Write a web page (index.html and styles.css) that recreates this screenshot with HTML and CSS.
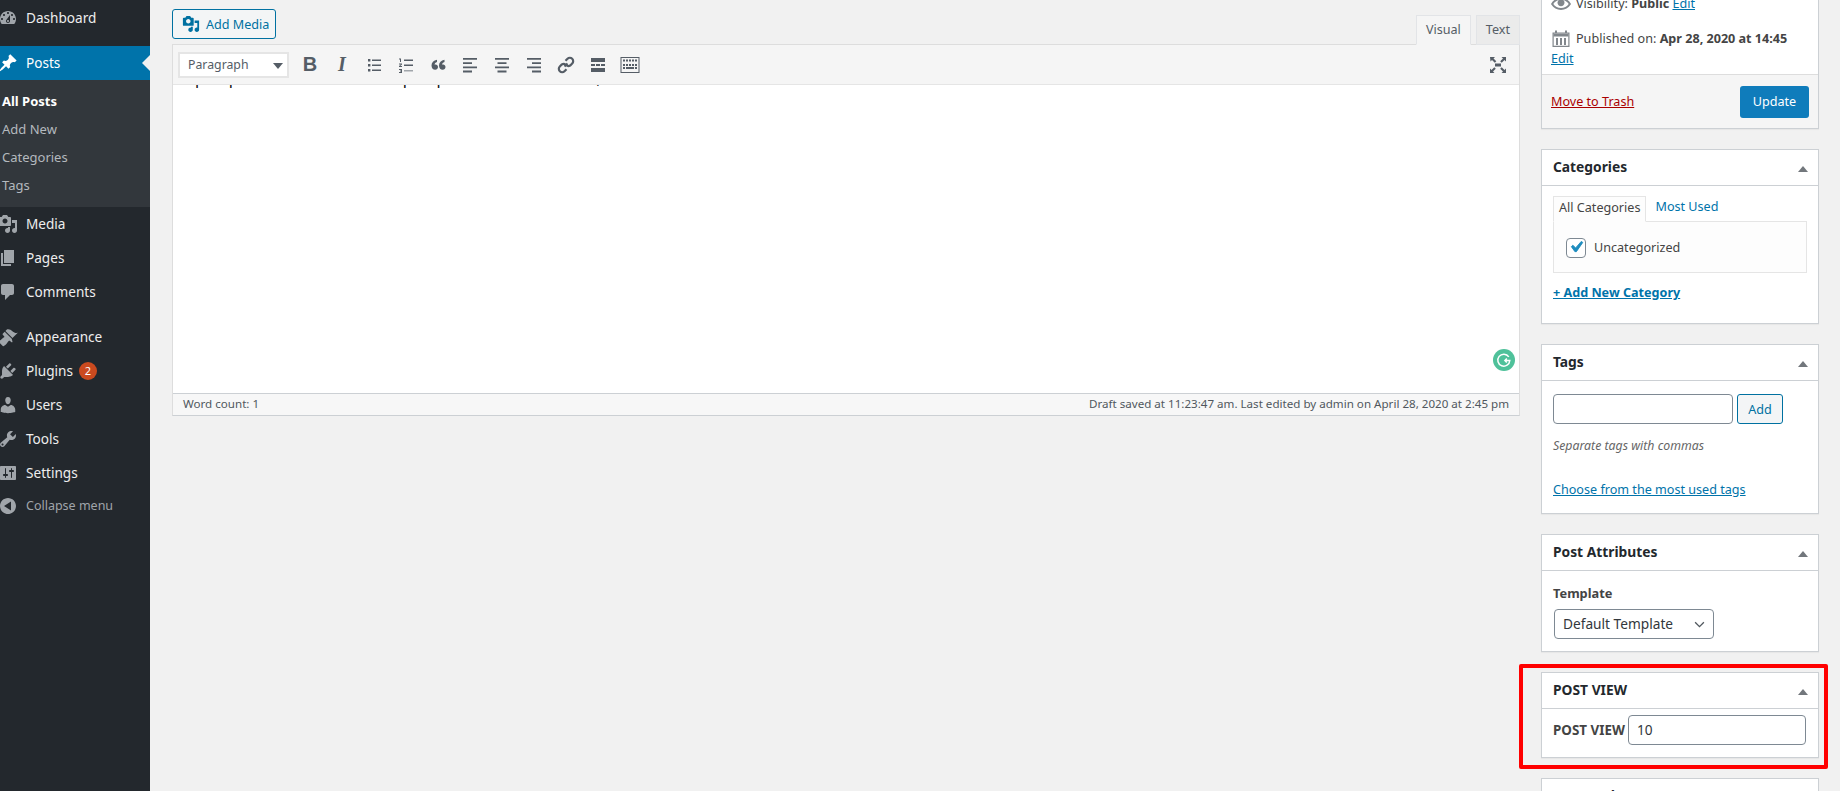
FILE: index.html
```html
<!DOCTYPE html>
<html lang="en">
<head>
<meta charset="utf-8">
<title>Edit Post</title>
<link rel="stylesheet" href="styles.css">
</head>
<body>
<svg class="defs" width="0" height="0" aria-hidden="true">
  <symbol id="i-media" viewBox="0 0 20 20"><path d="M13 11V4c0-.55-.45-1-1-1h-1.67L9 1H5L3.67 3H2c-.55 0-1 .45-1 1v7c0 .55.45 1 1 1h10c.55 0 1-.45 1-1zM7 4.5c1.38 0 2.5 1.12 2.5 2.5S8.38 9.5 7 9.5 4.5 8.38 4.5 7 5.62 4.5 7 4.5zM14 6h5v10.5c0 1.38-1.12 2.5-2.5 2.5S14 17.88 14 16.5s1.12-2.5 2.5-2.5c.17 0 .34.02.5.05V9h-3V6zm-4 8.05V13h2v3.5c0 1.38-1.12 2.5-2.5 2.5S7 17.88 7 16.5 8.12 14 9.5 14c.17 0 .34.02.5.05z"/></symbol>
</svg>
<div class="app">
  <nav class="sidebar">
    <a class="item"><svg class="ico" viewBox="0 0 20 20"><path d="M3.76 16h12.48c1.1-1.37 1.76-3.11 1.76-5 0-4.42-3.58-8-8-8s-8 3.58-8 8c0 1.89.66 3.63 1.76 5zM10 4c.55 0 1 .45 1 1s-.45 1-1 1-1-.45-1-1 .45-1 1-1zM6 6c.55 0 1 .45 1 1s-.45 1-1 1-1-.45-1-1 .45-1 1-1zm8 0c.55 0 1 .45 1 1s-.45 1-1 1-1-.45-1-1 .45-1 1-1zm-5.37 5.55L12 7v6c0 1.1-.9 2-2 2s-2-.9-2-2c0-.57.24-1.08.63-1.45zM4 10c.55 0 1 .45 1 1s-.45 1-1 1-1-.45-1-1 .45-1 1-1zm12 0c.55 0 1 .45 1 1s-.45 1-1 1-1-.45-1-1 .45-1 1-1zm-5 3c0-.55-.45-1-1-1s-1 .45-1 1 .45 1 1 1 1-.45 1-1z"/></svg>Dashboard</a>
    <div class="gap"></div>
    <a class="item current"><svg class="ico" viewBox="0 0 20 20"><path d="M10.44 3.02l1.82-1.82 6.36 6.35-1.83 1.82c-1.05-.68-2.48-.57-3.41.36l-.75.75c-.92.93-1.04 2.35-.35 3.41l-1.83 1.82-2.41-2.41-2.8 2.79c-.42.42-3.38 2.71-3.8 2.29s1.86-3.39 2.28-3.81l2.79-2.79L4.1 9.36l1.83-1.82c1.05.69 2.48.57 3.4-.36l.75-.75c.93-.92 1.05-2.35.36-3.41z"/></svg>Posts</a>
    <ul class="submenu">
      <li class="on">All Posts</li>
      <li>Add New</li>
      <li>Categories</li>
      <li>Tags</li>
    </ul>
    <a class="item"><svg class="ico" viewBox="0 0 20 20"><use href="#i-media"/></svg>Media</a>
    <a class="item"><svg class="ico" viewBox="0 0 20 20"><path d="M6 15V2h10v13H6zm-1 1h8v2H3V5h2v11z"/></svg>Pages</a>
    <a class="item"><svg class="ico" viewBox="0 0 20 20"><path d="M5 2h9c1.1 0 2 .9 2 2v7c0 1.1-.9 2-2 2h-2l-5 5v-5H5c-1.1 0-2-.9-2-2V4c0-1.1.9-2 2-2z"/></svg>Comments</a>
    <div class="gap-s"></div>
    <a class="item"><svg class="ico" viewBox="0 0 20 20"><path d="M14.48 11.06L7.41 3.99l1.5-1.5c.5-.56 2.3-.47 3.51.32 1.21.8 1.43 1.28 2.91 2.1 1.18.64 2.45 1.26 4.45.85zm-.71.71L6.7 4.7 4.93 6.47c-.39.39-.39 1.02 0 1.41l1.06 1.06c.39.39.39 1.03 0 1.42-.6.6-1.43 1.11-2.21 1.69-.35.26-.7.53-1.01.84C1.43 13.23.4 14.55 1.1 15.25l3.65 3.65c.7.7 2.02-.33 3.37-1.68.31-.31.58-.66.84-1.01.58-.78 1.09-1.61 1.69-2.21.39-.39 1.03-.39 1.42 0l1.06 1.06c.39.39 1.02.39 1.41 0z"/></svg>Appearance</a>
    <a class="item"><svg class="ico" viewBox="0 0 20 20"><path d="M13.11 4.36L9.87 7.6 8 5.73l3.24-3.24c.35-.34 1.05-.2 1.56.32.52.51.66 1.21.31 1.55zm-8 1.77l.91-1.12 9.01 9.01-1.19.84c-.71.71-2.63 1.16-3.82 1.16H6.14L4.9 17.26c-.59.59-1.54.59-2.12 0-.59-.58-.59-1.53 0-2.12l1.24-1.24v-3.88c0-1.13.4-3.19 1.09-3.89zm7.26 3.97l3.24-3.24c.34-.35 1.04-.21 1.55.31.52.51.66 1.21.31 1.55l-3.24 3.25z"/></svg>Plugins<span class="badge">2</span></a>
    <a class="item"><svg class="ico" viewBox="0 0 20 20"><path d="M10 9.25c-2.27 0-2.73-3.44-2.73-3.44C7 4.02 7.82 2 9.97 2c2.16 0 2.98 2.02 2.71 3.81 0 0-.41 3.44-2.68 3.44zm0 2.57L12.72 10c2.39 0 4.52 2.33 4.52 4.53v2.49s-3.65 1.13-7.24 1.13c-3.65 0-7.24-1.13-7.24-1.13v-2.49c0-2.25 1.94-4.48 4.47-4.48z"/></svg>Users</a>
    <a class="item"><svg class="ico" viewBox="0 0 20 20"><path d="M16.68 9.77c-1.34 1.34-3.3 1.67-4.95.99l-5.41 6.52c-.99.99-2.59.99-3.58 0s-.99-2.59 0-3.57l6.52-5.42c-.68-1.65-.35-3.61.99-4.95 1.28-1.28 3.12-1.62 4.72-1.06l-2.89 2.89 2.82 2.82 2.86-2.87c.53 1.58.18 3.39-1.08 4.65zM3.81 16.21c.4.39 1.04.39 1.43 0 .4-.4.4-1.04 0-1.43-.39-.4-1.03-.4-1.43 0-.39.39-.39 1.03 0 1.43z"/></svg>Tools</a>
    <a class="item"><svg class="ico" viewBox="0 0 20 20"><path d="M18 16V4c0-.55-.45-1-1-1H3c-.55 0-1 .45-1 1v12c0 .55.45 1 1 1h14c.55 0 1-.45 1-1zM8 11h1c.55 0 1 .45 1 1s-.45 1-1 1H8v1.5c0 .28-.22.5-.5.5s-.5-.22-.5-.5V13H6c-.55 0-1-.45-1-1s.45-1 1-1h1V5.5c0-.28.22-.5.5-.5s.5.22.5.5V11zm5-2h-1c-.55 0-1-.45-1-1s.45-1 1-1h1V5.5c0-.28.22-.5.5-.5s.5.22.5.5V7h1c.55 0 1 .45 1 1s-.45 1-1 1h-1v5.5c0 .28-.22.5-.5.5s-.5-.22-.5-.5V9z"/></svg>Settings</a>
    <a class="item collapse"><svg class="ico" viewBox="0 0 20 20"><path d="M18 10c0-4.42-3.58-8-8-8s-8 3.58-8 8 3.58 8 8 8 8-3.58 8-8zm-5-4.5v9L6 10z"/></svg>Collapse menu</a>
  </nav>

  <main class="main">
    <section class="editor-col">
      <div class="editor-top">
        <button class="btn-media"><svg class="ico-media" viewBox="0 0 20 20"><use href="#i-media"/></svg>Add Media</button>
        <div class="tabs">
          <span class="tab active">Visual</span>
          <span class="tab">Text</span>
        </div>
      </div>
      <div class="editor">
        <div class="toolbar">
          <div class="format">Paragraph<span class="caret"></span></div>
          <span class="tb tb-b">B</span>
          <span class="tb tb-i">I</span>
          <span class="tb"><svg viewBox="0 0 20 20"><path d="M4 4h2.400v2.400H4zM4 9h2.400v2.400H4zM4 14h2.400v2.400H4zM8 4.500h9v1.500H8zM8 9.500h9v1.500H8zM8 14.500h9v1.500H8z"/></svg></span>
          <span class="tb"><svg viewBox="0 0 20 20"><path d="M3 3.500h2v3.500H4V4.500H3zM3 8.500h3v1L4.200 11H6v1H3v-1l1.800-1.500H3zM3 14h3v4H3v-1h2v-.5H4v-1h1V15H3zM8 4.500h9v1.500H8zM8 9.500h9v1.500H8z"/><path class="tb-light" d="M8 15h9v1.500H8z"/></svg></span>
          <span class="tb"><svg viewBox="0 0 20 20"><path d="M9.500 4.200v2.300C7.900 7 7.200 8 7.100 9.200c.3-.1.600-.2 1-.2 1.300 0 2.400 1 2.400 2.500 0 1.600-1.200 2.800-2.800 2.800C5.700 14.300 4 12.700 4 10c0-3 2-5.200 5.500-5.800zM17 4.200v2.300c-1.600.5-2.300 1.500-2.400 2.700.3-.1.600-.2 1-.2 1.300 0 2.400 1 2.400 2.500 0 1.600-1.200 2.800-2.800 2.800-2 0-3.700-1.600-3.700-4.300 0-3 2-5.200 5.500-5.800z" transform="translate(-.5 .5)"/></svg></span>
          <span class="tb"><svg viewBox="0 0 20 20"><path d="M3 3h14v1.800H3zM3 7.200h9V9H3zM3 11.400h14v1.800H3zM3 15.600h9v1.800H3z"/></svg></span>
          <span class="tb"><svg viewBox="0 0 20 20"><path d="M3 3h14v1.800H3zM5.500 7.200h9V9h-9zM3 11.400h14v1.800H3zM5.500 15.600h9v1.800h-9z"/></svg></span>
          <span class="tb"><svg viewBox="0 0 20 20"><path d="M3 3h14v1.800H3zM8 7.200h9V9H8zM3 11.400h14v1.800H3zM8 15.600h9v1.800H8z"/></svg></span>
          <span class="tb"><svg viewBox="0 0 20 20"><g class="tb-link"><path d="M8.500 11.500l3-3"/><path d="M9.500 5.800l2-2a3.300 3.300 0 0 1 4.700 4.700l-2 2a3.300 3.300 0 0 1-4-.5"/><path d="M10.500 14.200l-2 2a3.300 3.300 0 0 1-4.700-4.700l2-2a3.300 3.300 0 0 1 4 .5"/></g></svg></span>
          <span class="tb"><svg viewBox="0 0 20 20"><path d="M3 3h14v4H3zM3 13h14v4H3zM3 9h4v2H3zM8 9h4v2H8zM13 9h4v2h-4z"/></svg></span>
          <span class="tb"><svg viewBox="0 0 20 20"><path fill-rule="evenodd" d="M.5 2h19v16H.5zM1.500 3v14h17V3z"/><path d="M3 4.500h2v2H3zM6 4.500h2v2H6zM9 4.500h2v2H9zM12 4.500h2v2h-2zM15 4.500h2v2h-2zM3 9h2v2H3zM6 9h2v2H6zM9 9h2v2H9zM12 9h2v2h-2zM15 9h2v2h-2zM3 12h2v2H3zM6 12h8v2H6zM15 12h2v2h-2z"/></svg></span>
          <span class="tb tb-full"><svg viewBox="0 0 20 20"><path d="M7 8.500h6v3H7zM2 2h5L5.500 3.500l2.800 2.800-1.500 1.500L4 5 2.500 6.500zM18 2v4.500L16.500 5l-2.800 2.800-1.500-1.500L15 3.500 13.500 2zM2 18v-4.500L3.500 15l2.800-2.800 1.500 1.500L5 16.500 6.500 18zM18 18h-4.500l1.500-1.500-2.800-2.800 1.500-1.500L16.500 15l1.500-1.500z"/></svg></span>
        </div>
        <div class="content">
          <p class="clipped"><span class="g1">p</span><span class="g2">p</span><span class="g3">p</span><span class="g2">p</span><span class="g4">,</span></p>
          <span class="grammarly"><svg viewBox="0 0 22 22"><path d="M15.800 7.800A6 6 0 1 0 16.800 11.500H12M13.800 9.500L11.900 11.500l1.900 2" fill="none" stroke="#fff" stroke-width="1.500"/></svg></span>
        </div>
        <div class="statusbar">
          <span>Word count: <b class="count">1</b></span>
          <span>Draft saved at 11:23:47 am. Last edited by admin on April 28, 2020 at 2:45 pm</span>
        </div>
      </div>
    </section>

    <aside class="side">
      <div class="box publish">
        <div class="pub-body">
          <div class="pub-row"><svg class="pub-ico" viewBox="0 0 20 20"><path d="M19.700 9.400C17.700 6 14 3.900 10 3.900S2.300 6 .3 9.400L0 10l.3.600c2 3.400 5.700 5.500 9.700 5.500s7.700-2.100 9.700-5.500l.3-.6-.3-.6zM10 14.100c-3.100 0-6-1.600-7.700-4.100C3.600 8 5.700 6.600 8 6.100c-.9.600-1.500 1.600-1.500 2.700 0 1.900 1.600 3.500 3.500 3.500s3.500-1.600 3.500-3.500c0-1.200-.6-2.200-1.500-2.700 2.300.5 4.400 1.900 5.700 3.900-1.700 2.500-4.600 4.100-7.700 4.100z"/></svg><span>Visibility: <b>Public</b> <a class="link">Edit</a></span></div>
          <div class="pub-row pub-date"><svg class="pub-ico" viewBox="0 0 20 20"><path fill-rule="evenodd" d="M1.500 3.500H4V1.500h2v2h8V1.500h2v2h2.500V18h-17zM2.700 4.700v12.100h14.600V4.700z"/><path d="M2.500 5h15v2.500h-15zM5 9h2v7H5zM9 9h2v7H9zM13 9h2v7h-2z"/></svg><span>Published on: <b>Apr 28, 2020 at 14:45</b></span></div>
          <a class="link pub-edit">Edit</a>
        </div>
        <div class="pub-foot">
          <a class="trash">Move to Trash</a>
          <button class="btn-update">Update</button>
        </div>
      </div>

      <div class="box">
        <h2 class="box-head">Categories<span class="arrow"></span></h2>
        <div class="cat-body">
          <div class="cat-tabs"><span class="cat-tab on">All Categories</span><span class="cat-tab">Most Used</span></div>
          <div class="cat-panel"><span class="check"><svg viewBox="0 0 20 20"><path d="M14.830 4.890l1.340.940-5.810 8.380H9.020L5.780 9.670l1.340-1.250 2.570 2.400z"/></svg></span>Uncategorized</div>
          <a class="link add-cat">+ Add New Category</a>
        </div>
      </div>

      <div class="box">
        <h2 class="box-head">Tags<span class="arrow"></span></h2>
        <div class="tag-body">
          <div class="tag-row"><span class="field tag-input"></span><button class="btn-add">Add</button></div>
          <p class="help">Separate tags with commas</p>
          <a class="link">Choose from the most used tags</a>
        </div>
      </div>

      <div class="box">
        <h2 class="box-head">Post Attributes<span class="arrow"></span></h2>
        <div class="attr-body">
          <p class="attr-label">Template</p>
          <div class="field attr-select">Default Template<svg class="chev" viewBox="0 0 12 8"><path d="M1 1.500l5 5 5-5" fill="none" stroke="#50575e" stroke-width="1.500"/></svg></div>
        </div>
      </div>

      <div class="box box-flag">
        <h2 class="box-head">POST VIEW<span class="arrow"></span></h2>
        <div class="view-body">
          <label class="view-label">POST VIEW</label>
          <div class="field view-input">10</div>
        </div>
        <span class="flag"></span>
      </div>

      <div class="box">
        <h2 class="box-head">Featured Image<span class="arrow"></span></h2>
      </div>
    </aside>
  </main>
</div>
</body>
</html>
```

FILE: styles.css
```css
* { box-sizing: border-box; }
html, body { margin: 0; height: 791px; overflow: hidden; }
body { font: 12.600px/1.4 "Noto Sans", "Open Sans", sans-serif; color: #444; background: #f1f1f1; }
.defs { position: absolute; }
.app { display: flex; height: 791px; overflow: hidden; }

/* sidebar */
.sidebar { width: 150px; flex: none; background: #23282d; color: #eee; font-size: 13.600px; padding-top: 1px; }
.item { display: flex; align-items: center; height: 34px; padding-left: 26px; position: relative; }
.ico { position: absolute; left: -2px; top: 7px; width: 20px; height: 20px; fill: #a0a5aa; }
.gap { height: 11px; }
.gap-s { height: 11px; }
.current { background: #0073aa; color: #fff; }
.current .ico { fill: #fff; }
.current::after { content: ""; position: absolute; right: 0; top: 9px; border: 8px solid transparent; border-right-color: #f1f1f1; border-left-width: 0; }
.submenu { list-style: none; margin: 0; padding: 7px 0 8px 2px; background: #32373c; color: #b4b9be; font-size: 13px; }
.submenu li { height: 28px; line-height: 28px; }
.submenu .on { color: #fff; font-weight: 700; }
.badge { width: 18px; height: 18px; border-radius: 50%; background: #ca4a1f; color: #fff; font-size: 11px; line-height: 18px; text-align: center; margin-left: 6px; }
.collapse { color: #a0a5aa; font-size: 12.500px; height: 32px; }
.collapse .ico { top: 6px; }

/* main */
.main { flex: 1; display: flex; padding-left: 22px; align-items: flex-start; min-width: 0; }
.editor-col { width: 1348px; flex: none; padding-top: 9px; }
.editor-top { display: flex; justify-content: space-between; align-items: flex-end; height: 35px; }
.btn-media { align-self: flex-start; display: flex; align-items: center; gap: 6px; width: 104px; height: 30px; padding: 0 0 0 9px; border: 1px solid #0071a1; border-radius: 3px; background: #f3f5f6; color: #0071a1; font: 12.600px "Noto Sans", sans-serif; }
.ico-media { width: 18px; height: 18px; fill: #0071a1; }
.tabs { display: flex; gap: 5px; position: relative; top: 1px; }
.tab { height: 30px; padding: 0 9px; line-height: 28px; border: 1px solid #e2e4e7; background: #ebebeb; color: #555d66; }
.tab.active { background: #f5f5f5; border-bottom-color: #f5f5f5; }
.editor { border: 1px solid #ccd0d4; border-top-color: #ddd; border-left-color: #ddd; border-right-color: #ddd; }
.toolbar { display: flex; align-items: center; height: 40px; padding-left: 5px; background: #f5f5f5; border-bottom: 1px solid #e5e5e5; }
.format { width: 111px; height: 26px; flex: none; margin-right: 5px; padding-left: 8px; line-height: 22px; font-size: 12.300px; background: #fff; border: 2px solid #e5e5e5; color: #555d66; position: relative; }
.caret { position: absolute; right: 4px; top: 9px; border: 5px solid transparent; border-top: 6px solid #555d66; border-bottom: 0; }
.tb { width: 32px; height: 30px; flex: none; display: flex; align-items: center; justify-content: center; color: #555d66; }
.tb svg { width: 20px; height: 20px; fill: #555d66; }
.tb-link { fill: none; stroke: #555d66; stroke-width: 2.200px; }
.tb-light { fill: #a0a5aa; }
.tb-b { font: 700 20px "Liberation Sans", sans-serif; }
.tb-i { font: italic 700 20px "Liberation Serif", serif; }
.tb-full { margin-left: auto; margin-right: 5px; }
.content { height: 308px; background: #fff; overflow: hidden; position: relative; }
.clipped { display: flex; margin: -17px 0 0; font-size: 16px; line-height: 20px; color: #111; }
.g1 { margin-left: 22px; }
.g2 { margin-left: 24px; }
.g3 { margin-left: 164px; }
.g4 { margin-left: 150px; }
.grammarly { position: absolute; right: 4px; bottom: 22px; width: 22px; height: 22px; border-radius: 50%; background: #4fc19a; display: flex; }
.grammarly svg { width: 22px; height: 22px; }
.statusbar { display: flex; justify-content: space-between; align-items: center; height: 22px; padding: 0 10px; background: #f7f7f7; border-top: 1px solid #ccd0d4; font-size: 11.600px; color: #50575e; }
.count { font-weight: 400; }

/* side */
.side { width: 278px; flex: none; margin-left: 21px; }
.box { background: #fff; border: 1px solid #ccd0d4; box-shadow: 0 1px 1px rgba(0,0,0,.04); margin-bottom: 20px; position: relative; }
.box-head { margin: 0; height: 36px; padding: 0 11px; border-bottom: 1px solid #ccd0d4; font-size: 13.800px; line-height: 34px; font-weight: 700; color: #23282d; position: relative; }
.arrow { position: absolute; right: 10px; top: 16px; border: 5px solid transparent; border-bottom: 6px solid #72777c; border-top: 0; }
.link { color: #0073aa; text-decoration: underline; }
.publish { height: 129px; display: flex; flex-direction: column; border-top: 0; }
.pub-body { flex: 1; padding: 0 9px; overflow: hidden; }
.pub-row { display: flex; align-items: center; gap: 5px; color: #444; height: 20px; }
.pub-row:first-child { margin-top: -6px; }
.pub-date { margin-top: 15px; }
.pub-ico { width: 20px; height: 20px; fill: #82878c; flex: none; }
.pub-edit { display: block; line-height: 20px; }
.pub-foot { height: 54px; display: flex; justify-content: space-between; align-items: center; padding: 0 9px; background: #f5f5f5; border-top: 1px solid #ddd; }
.trash { color: #a00; text-decoration: underline; }
.btn-update { width: 69px; height: 32px; border: 0; border-radius: 3px; background: #0f7cbb; color: #fff; font: 12.600px "Noto Sans", sans-serif; }

.cat-body { padding: 10px 11px 0; height: 137px; }
.cat-tabs { display: flex; height: 26px; }
.cat-tab { padding: 0 5px; line-height: 22px; color: #0073aa; }
.cat-tab.on { color: #444; border: 1px solid #e5e5e5; border-bottom-color: #fdfdfd; background: #fdfdfd; position: relative; z-index: 1; margin-right: 4px; }
.cat-panel { display: flex; align-items: center; gap: 8px; height: 52px; margin-top: -1px; padding: 1px 0 0 12px; background: #fdfdfd; border: 1px solid #e5e5e5; }
.check { width: 20px; height: 20px; border: 1.500px solid #7e8993; border-radius: 4px; background: #fff; display: flex; }
.check svg { width: 22px; height: 22px; margin: -2.500px; fill: #1e8cbe; stroke: #1e8cbe; stroke-width: .8px; }
.add-cat { display: block; margin-top: 11px; font-weight: 700; }

.tag-body { padding: 13px 11px 0; height: 132px; }
.tag-row { display: flex; gap: 4px; }
.field { display: block; height: 30px; background: #fff; border: 1px solid #7e8993; border-radius: 4px; }
.tag-input { width: 180px; }
.btn-add { width: 46px; height: 30px; border: 1px solid #0071a1; border-radius: 3px; background: #f3f5f6; color: #0071a1; font: 12.600px "Noto Sans", sans-serif; }
.help { margin: 13px 0 26px; font-style: italic; font-size: 12.300px; line-height: 18px; color: #666; }

.attr-body { padding: 13px 11px 0; height: 80px; }
.attr-label { margin: 0 0 7px; font-weight: 700; font-size: 12.800px; line-height: 18px; }
.attr-select { width: 160px; margin-left: 1px; padding-left: 8px; line-height: 28px; color: #32373c; font-size: 13.700px; position: relative; }
.chev { position: absolute; right: 8px; top: 11px; width: 11px; height: 7px; }

.view-body { display: flex; align-items: center; gap: 5px; height: 48px; padding: 0 11px 6px; }
.view-label { font-weight: 700; font-size: 13.400px; width: 70px; flex: none; white-space: nowrap; }
.view-input { width: 178px; padding-left: 8px; line-height: 28px; font-size: 13.700px; color: #32373c; }
.flag { position: absolute; left: -23px; right: -10px; top: -9px; bottom: -12px; border: 4px solid #f00; border-radius: 2px; pointer-events: none; }
```
